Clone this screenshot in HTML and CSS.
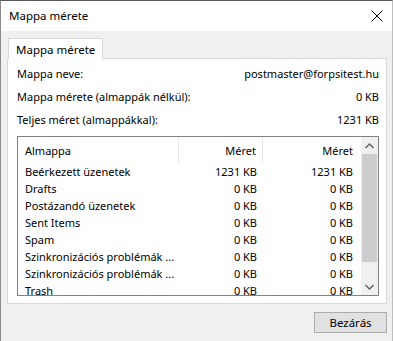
FILE: index.html
```html
<!DOCTYPE html>
<html lang="hu">
<head>
    <meta charset="UTF-8">
    <title>Mappa mérete</title>
    <link rel="stylesheet" href="styles.css">
</head>
<body>
    <div class="window">
        <div class="title-bar">
            <span class="title">Mappa mérete</span>
            <svg class="close-icon" width="12" height="12" viewBox="0 0 12 12">
                <path d="M0.5 0.5 L11.5 11.5 M11.5 0.5 L0.5 11.5" stroke="#000" stroke-width="1" fill="none"/>
            </svg>
        </div>
        <div class="dialog-body">
            <div class="tabs">
                <div class="tab active">Mappa mérete</div>
            </div>
            <div class="tab-panel">
                <div class="info-row">
                    <span>Mappa neve:</span>
                    <span>postmaster@forpsitest.hu</span>
                </div>
                <div class="info-row">
                    <span>Mappa mérete (almappák nélkül):</span>
                    <span>0 KB</span>
                </div>
                <div class="info-row">
                    <span>Teljes méret (almappákkal):</span>
                    <span>1231 KB</span>
                </div>

                <div class="list-view">
                    <div class="list-content">
                        <div class="list-header">
                            <div class="col col-name">Almappa</div>
                            <div class="col col-size">Méret</div>
                            <div class="col col-total">Méret</div>
                        </div>
                        <div class="list-rows">
                            <div class="list-row"><span class="col col-name">Beérkezett üzenetek</span><span class="col col-size">1231 KB</span><span class="col col-total">1231 KB</span></div>
                            <div class="list-row"><span class="col col-name">Drafts</span><span class="col col-size">0 KB</span><span class="col col-total">0 KB</span></div>
                            <div class="list-row"><span class="col col-name">Postázandó üzenetek</span><span class="col col-size">0 KB</span><span class="col col-total">0 KB</span></div>
                            <div class="list-row"><span class="col col-name">Sent Items</span><span class="col col-size">0 KB</span><span class="col col-total">0 KB</span></div>
                            <div class="list-row"><span class="col col-name">Spam</span><span class="col col-size">0 KB</span><span class="col col-total">0 KB</span></div>
                            <div class="list-row"><span class="col col-name">Szinkronizációs problémák ...</span><span class="col col-size">0 KB</span><span class="col col-total">0 KB</span></div>
                            <div class="list-row"><span class="col col-name">Szinkronizációs problémák ...</span><span class="col col-size">0 KB</span><span class="col col-total">0 KB</span></div>
                            <div class="list-row"><span class="col col-name">Trash</span><span class="col col-size">0 KB</span><span class="col col-total">0 KB</span></div>
                        </div>
                    </div>
                    <div class="scrollbar">
                        <div class="scroll-arrow">
                            <svg width="9" height="6" viewBox="0 0 9 6"><path d="M0.5 5 L4.5 1 L8.5 5" stroke="#606060" stroke-width="1.4" fill="none"/></svg>
                        </div>
                        <div class="scroll-track">
                            <div class="scroll-thumb"></div>
                        </div>
                        <div class="scroll-arrow">
                            <svg width="9" height="6" viewBox="0 0 9 6"><path d="M0.5 1 L4.5 5 L8.5 1" stroke="#606060" stroke-width="1.4" fill="none"/></svg>
                        </div>
                    </div>
                </div>
            </div>
            <div class="footer">
                <button class="btn">Bezárás</button>
            </div>
        </div>
    </div>
</body>
</html>
```

FILE: styles.css
```css
* {
    box-sizing: border-box;
}
body {
    margin: 0;
    font-family: "Noto Sans", "Open Sans", sans-serif;
    font-size: 11px;
    color: #000;
    background: #f0f0f0;
}
.window {
    width: 393px;
    height: 341px;
    border-top: 1px solid #5a5a5a;
    border-left: 1px solid #8a8a8a;
    border-right: 1px solid #bdbdbd;
    background: #f0f0f0;
    display: flex;
    flex-direction: column;
}
.title-bar {
    height: 30px;
    background: #fff;
    display: flex;
    align-items: center;
    justify-content: space-between;
    padding: 0 8px 0 8px;
}
.title {
    font-size: 11.5px;
    margin-top: -1px;
}
.close-icon {
    margin-right: 1px;
}
.dialog-body {
    flex: 1;
    padding: 7px 5px 0 6px;
}
.tabs {
    display: flex;
    padding-left: 1px;
}
.tab {
    height: 21px;
    padding: 0 7px;
    font-size: 11.5px;
    background: #fff;
    border: 1px solid #d9d9d9;
    border-bottom: none;
    display: flex;
    align-items: center;
    margin-bottom: -1px;
    position: relative;
    z-index: 1;
}
.tab-panel {
    background: #fff;
    border: 1px solid #d9d9d9;
    height: 246px;
    padding: 3px 7px 0 9px;
}
.info-row {
    display: flex;
    justify-content: space-between;
    height: 23px;
    align-items: center;
}
.list-view {
    margin-top: 5px;
    border: 1px solid #828282;
    height: 160px;
    display: flex;
    overflow: hidden;
}
.list-content {
    flex: 1;
    overflow: hidden;
}
.list-header {
    display: flex;
    height: 26px;
    align-items: center;
}
.list-header .col {
    height: 26px;
    display: flex;
    align-items: center;
    border-right: 1px solid #e5e5e5;
}
.list-header .col-name {
    justify-content: flex-start;
}
.list-header .col-size,
.list-header .col-total {
    justify-content: flex-end;
}
.col {
    white-space: nowrap;
    overflow: hidden;
}
.col-name {
    width: 161px;
    padding-left: 7px;
}
.col-size {
    width: 84px;
    text-align: right;
    padding-right: 6px;
}
.col-total {
    width: 95px;
    text-align: right;
    padding-right: 5px;
}
.list-header .col-total {
    border-right: none;
}
.list-row {
    display: flex;
    height: 17px;
    align-items: center;
}
.scrollbar {
    width: 17px;
    background: #f0f0f0;
    display: flex;
    flex-direction: column;
}
.scroll-arrow {
    height: 17px;
    display: flex;
    align-items: center;
    justify-content: center;
}
.scroll-track {
    flex: 1;
    padding: 0 1px;
}
.scroll-thumb {
    height: 108px;
    background: #cdcdcd;
}
.footer {
    display: flex;
    justify-content: flex-end;
    padding-top: 8px;
}
.btn {
    width: 73px;
    height: 21px;
    font-family: inherit;
    font-size: 11.5px;
    background: #e1e1e1;
    border: 1px solid #adadad;
    padding: 0;
    margin-right: 0;
}
```
